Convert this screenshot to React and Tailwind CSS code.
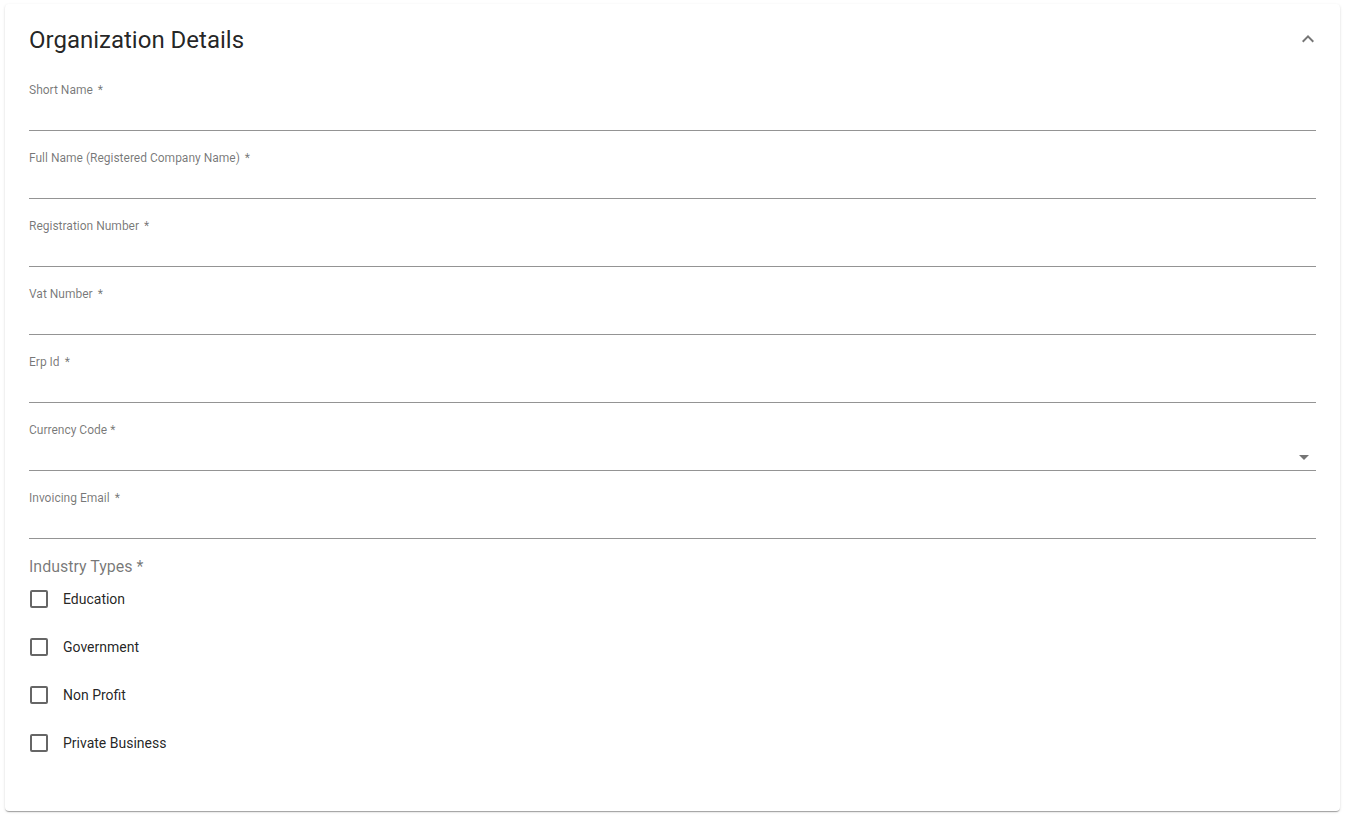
import React from "react";

function Field({ label, select, tight }) {
  return (
    <div className="mt-[19px] first:mt-[26px]">
      <div className="text-[12px] leading-[16px] text-[rgba(0,0,0,0.54)]">
        {label}
        {tight ? <span>&nbsp;*</span> : <span className="ml-[5px]">*</span>}
      </div>
      <div className="relative h-[33px] border-b border-[rgba(0,0,0,0.42)]">
        {select && (
          <svg
            viewBox="0 0 24 24"
            className="absolute right-0 top-[7px] h-[24px] w-[24px] fill-[rgba(0,0,0,0.54)]"
          >
            <path d="M7 10l5 5 5-5z" />
          </svg>
        )}
      </div>
    </div>
  );
}

function Check({ label }) {
  return (
    <div className="flex h-[48px] items-center">
      <div className="ml-[1px] h-[18px] w-[18px] rounded-[2px] border-2 border-[rgba(0,0,0,0.6)]" />
      <span className="ml-[15px] text-[14px] text-[rgba(0,0,0,0.87)]">{label}</span>
    </div>
  );
}

export default function App() {
  return (
    <div className="min-h-[817px] bg-white pt-[4px] font-['Roboto',sans-serif]">
      <div className="ml-[5px] w-[1335px] rounded-[4px] bg-white px-[24px] pb-[44px] pt-[20px] shadow-[0px_2px_1px_-1px_rgba(0,0,0,0.2),0px_1px_1px_0px_rgba(0,0,0,0.14),0px_1px_3px_0px_rgba(0,0,0,0.12)]">
        <div className="relative flex h-[32px] items-center">
          <h1 className="text-[24px] leading-[32px] text-[rgba(0,0,0,0.87)]">
            Organization Details
          </h1>
          <svg
            viewBox="0 0 24 24"
            className="absolute right-[-4px] top-[3px] h-[24px] w-[24px] fill-[rgba(0,0,0,0.54)]"
          >
            <path d="M12 8l-6 6 1.41 1.41L12 10.83l4.59 4.58L18 14z" />
          </svg>
        </div>
        <div className="flex flex-col">
          <Field label="Short Name" />
          <Field label="Full Name (Registered Company Name)" />
          <Field label="Registration Number" />
          <Field label="Vat Number" />
          <Field label="Erp Id" />
          <Field label="Currency Code" select tight />
          <Field label="Invoicing Email" />
        </div>
        <div className="mt-[20px] text-[16px] leading-[16px] text-[rgba(0,0,0,0.54)]">
          Industry Types *
        </div>
        <div className="flex flex-col">
          <Check label="Education" />
          <Check label="Government" />
          <Check label="Non Profit" />
          <Check label="Private Business" />
        </div>
      </div>
    </div>
  );
}
